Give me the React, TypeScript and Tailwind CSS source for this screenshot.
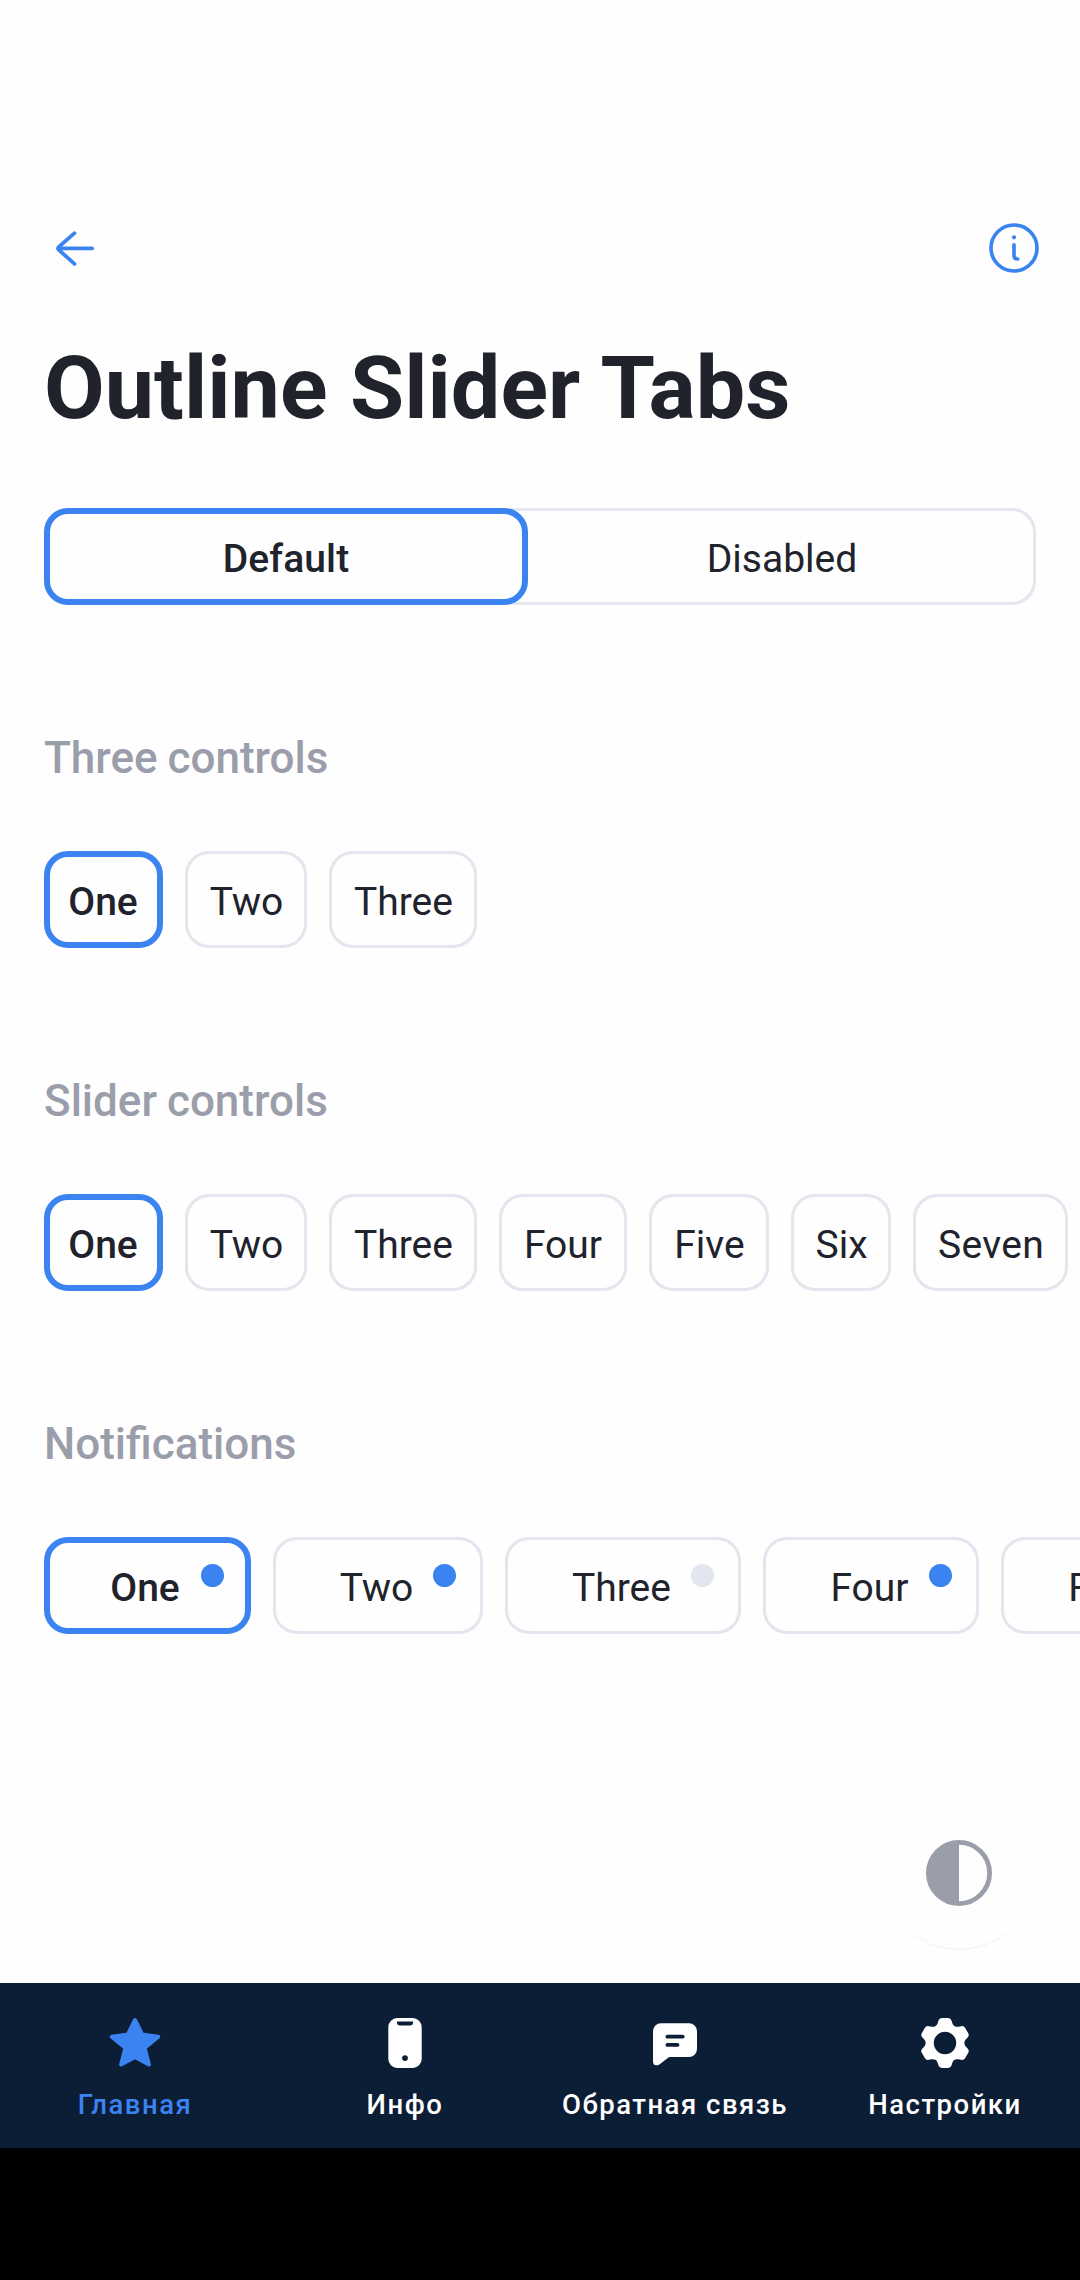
import type { ReactNode } from "react";
import clsx from "clsx";

type Tab = { label: string; box: string; text?: string; dot?: "on" | "off" };

const threeTabs: Tab[] = [
  { label: "One", box: "w-[119px]", text: "-ml-px" },
  { label: "Two", box: "w-[122px]", text: "ml-px" },
  { label: "Three", box: "w-[148px]", text: "ml-px" },
];

const sliderTabs: Tab[] = [
  ...threeTabs,
  { label: "Four", box: "w-[128px]" },
  { label: "Five", box: "w-[120px]", text: "ml-px" },
  { label: "Six", box: "w-[100px]", text: "ml-px" },
  { label: "Seven", box: "w-[155px]", text: "ml-px tracking-[0.3px]" },
];

const notificationTabs: Tab[] = [
  { label: "One", box: "w-[207px]", text: "-ml-[5px]", dot: "on" },
  { label: "Two", box: "w-[210px]", text: "-ml-[3px]", dot: "on" },
  { label: "Three", box: "w-[236px]", text: "-ml-[3px]", dot: "off" },
  { label: "Four", box: "w-[216px]", text: "-ml-[3px]", dot: "on" },
  { label: "Five", box: "w-[208px]", text: "-ml-[3px]", dot: "on" },
];

function TabRow({ tabs }: { tabs: Tab[] }) {
  return (
    <div className="mt-[67px] flex gap-[22px] overflow-hidden pl-11">
      {tabs.map((tab, i) => (
        <button
          key={tab.label}
          className={clsx(
            "relative flex h-[97px] shrink-0 items-center justify-center rounded-[24px] text-[39px] leading-[46px] text-[#20222c]",
            tab.box,
            i === 0 ? "border-[6px] border-[#3a83f1] font-medium" : "border-[3px] border-[#e3e6ee]",
          )}
        >
          <span className={clsx("pt-1", tab.text)}>{tab.label}</span>
          {tab.dot && (
            <span
              className={clsx(
                "absolute size-[23px] rounded-full",
                i === 0 ? "top-[21px] right-[21px]" : "top-6 right-6",
                tab.dot === "on" ? "bg-[#3a83f1]" : "bg-[#e3e6ee]",
              )}
            />
          )}
        </button>
      ))}
    </div>
  );
}

function Section({ title, tabs }: { title: string; tabs: Tab[] }) {
  return (
    <section className="mt-[127px]">
      <h2 className="pl-11 text-[44px] leading-[52px] font-medium text-[#9a9eaa] [word-spacing:-1px]">
        {title}
      </h2>
      <TabRow tabs={tabs} />
    </section>
  );
}

function gearPath(cx: number, cy: number) {
  const tooth: [string, number[]][] = [
    ["C", [-8.4, -17.5, -7.8, -18.5, -7.3, -20]],
    ["L", [-6.6, -22.3]],
    ["Q", [-5.8, -25, -3.2, -25]],
    ["L", [3.2, -25]],
    ["Q", [5.8, -25, 6.6, -22.3]],
    ["L", [7.3, -20]],
    ["C", [7.8, -18.5, 8.4, -17.5, 9.7, -16.8]],
  ];
  let d = `M${cx - 9.7} ${cy - 16.8}`;
  for (let k = 0; k < 6; k++) {
    const c = Math.cos((k * Math.PI) / 3);
    const s = Math.sin((k * Math.PI) / 3);
    for (const [cmd, p] of tooth) {
      d += cmd;
      for (let i = 0; i < p.length; i += 2) {
        d += `${(cx + p[i] * c - p[i + 1] * s).toFixed(2)} ${(cy + p[i] * s + p[i + 1] * c).toFixed(2)} `;
      }
    }
  }
  return `${d}ZM${cx - 11.2} ${cy}a11.2 11.2 0 1 0 22.4 0a11.2 11.2 0 1 0 -22.4 0Z`;
}

function Icon({ children }: { children: ReactNode }) {
  return (
    <svg className="size-[66px]" viewBox="0 0 66 66" fill="currentColor">
      {children}
    </svg>
  );
}

const navItems = [
  {
    label: "Главная",
    active: true,
    icon: (
      <path
        d="M33 10L40.1 24.4L56.2 26.8L42.6 38L46.9 54.5L33 47L19.1 54.5L23.4 38L9.8 26.8L25.9 24.4Z"
        stroke="currentColor"
        strokeWidth="4"
        strokeLinejoin="round"
      />
    ),
  },
  {
    label: "Инфо",
    icon: (
      <path
        fillRule="evenodd"
        d="M25.3 8H40.7A9 9 0 0 1 49.7 17V49A9 9 0 0 1 40.7 58H25.3A9 9 0 0 1 16.3 49V17A9 9 0 0 1 25.3 8ZM25 11.5V12.6A3 3 0 0 0 28 15.6H38A3 3 0 0 0 41 12.6V11.5ZM33 45.2a2.9 2.9 0 1 0 0 5.8a2.9 2.9 0 1 0 0 -5.8Z"
      />
    ),
  },
  {
    label: "Обратная связь",
    icon: (
      <path
        fillRule="evenodd"
        d="M19 13.2H47A8 8 0 0 1 55 21.2V39A8 8 0 0 1 47 47H28.5Q26.8 47 25.5 48.2L17 54.7Q11 57 11 51V21.2A8 8 0 0 1 19 13.2ZM25.4 24.8a1.9 1.9 0 0 0 0 3.8H40.7a1.9 1.9 0 0 0 0 -3.8ZM25.4 33a1.9 1.9 0 0 0 0 3.8H35.5a1.9 1.9 0 0 0 0 -3.8Z"
      />
    ),
  },
  { label: "Настройки", icon: <path fillRule="evenodd" d={gearPath(33, 33)} /> },
];

export default function App() {
  return (
    <div className="flex h-[2280px] w-[1080px] flex-col overflow-hidden bg-[#fefefe] font-[Roboto,sans-serif] text-[#20222c]">
      <main className="relative flex-1">
        <header className="flex items-center justify-between pt-[215px] pr-[33px] pl-[42px] text-[#3a83f1]">
          <svg
            className="size-[66px]"
            viewBox="0 0 66 66"
            fill="none"
            stroke="currentColor"
            strokeWidth="3.7"
            strokeLinecap="round"
            strokeLinejoin="round"
          >
            <path d="M50.2 33.4H16.2M32.5 18.1L16.8 31.9Q15 33.4 16.8 34.9L32.5 48.9" />
          </svg>
          <svg
            className="size-[66px]"
            viewBox="0 0 66 66"
            fill="none"
            stroke="currentColor"
            strokeWidth="3.6"
            strokeLinecap="round"
          >
            <circle cx="33" cy="33" r="23" />
            <circle cx="33" cy="22.3" r="2.1" fill="currentColor" stroke="none" />
            <path d="M33 29.8V40.5Q33 44 36.8 44" />
          </svg>
        </header>

        <h1 className="mt-[55px] pl-11 text-[88px] leading-[104px] font-bold tracking-[0.05px] [word-spacing:0.5px]">
          Outline Slider Tabs
        </h1>

        <div className="mx-11 mt-[68px] flex h-[97px] rounded-[24px] text-[39px] leading-[46px] shadow-[inset_0_0_0_3px_#e3e6ee]">
          <button className="flex w-[484px] items-center justify-center rounded-[24px] border-[6px] border-[#3a83f1] bg-[#fefefe] font-medium">
            <span className="pt-1 tracking-[0.1px]">Default</span>
          </button>
          <button className="flex flex-1 items-center justify-center">
            <span className="pt-1">Disabled</span>
          </button>
        </div>

        <Section title="Three controls" tabs={threeTabs} />
        <Section title="Slider controls" tabs={sliderTabs} />
        <Section title="Notifications" tabs={notificationTabs} />

        <button className="absolute right-11 bottom-[34px] flex size-[154px] items-center justify-center rounded-full bg-[#fefefe] pt-0.5 text-[#9a9eaa] shadow-[0_1px_1px_-0.5px_rgba(0,0,0,0.1)]">
          <Icon>
            <circle cx="33" cy="33" r="30.6" fill="none" stroke="currentColor" strokeWidth="4.8" />
            <path d="M33 1A32 32 0 0 0 33 65Z" />
          </Icon>
        </button>
      </main>

      <nav className="grid h-[165px] grid-cols-4 bg-[#0c1d36]">
        {navItems.map((item) => (
          <button
            key={item.label}
            className={clsx(
              "flex flex-col items-center pt-[27px]",
              item.active ? "text-[#3a83f1]" : "text-white",
            )}
          >
            <Icon>{item.icon}</Icon>
            <span className="mt-[13px] text-[27.5px] leading-8 font-medium tracking-[1.5px] whitespace-nowrap">
              {item.label}
            </span>
          </button>
        ))}
      </nav>
      <div className="h-[132px] bg-black" />
    </div>
  );
}
